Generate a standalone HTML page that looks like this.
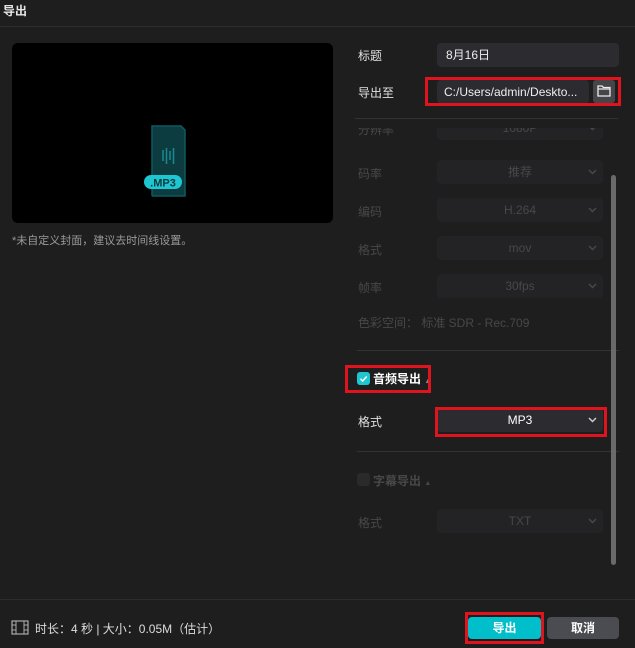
<!DOCTYPE html>
<html><head><meta charset="utf-8"><style>
*{margin:0;padding:0;box-sizing:border-box}
body{width:635px;height:648px;background:#1e1e1e;font-family:"Liberation Sans","Noto Sans CJK SC",sans-serif;color:#e6e6e6;font-size:12px;position:relative;overflow:hidden}
.a{position:absolute}
.lbl{position:absolute;left:358px;font-size:12px;color:#e0e0e0}
.fd{color:#484848}
.inp{position:absolute;left:437px;width:166px;height:24px;border-radius:4px;background:#2b2b30;font-size:12px;line-height:24px}
.fi{background:#232326;color:#484848;text-align:center}
.chev{position:absolute;right:6px;top:9px;width:9px;height:6px}
.red{position:absolute;border:3px solid #e0141e}
.hr{position:absolute;height:1px;background:#333}
</style></head><body>
<svg width="0" height="0" style="position:absolute"><defs><symbol id="cv" viewBox="0 0 9 6"><path d="M1 1l3.5 3.5L8 1" fill="none" stroke="currentColor" stroke-width="1.5"/></symbol></defs></svg>
<div class="a" style="left:3px;top:2px;font-size:12px;font-weight:bold">导出</div>
<div class="hr" style="left:0;top:26px;width:635px;background:#2e2e2e"></div>

<div class="a" style="left:12px;top:43px;width:321px;height:180px;background:#000;border-radius:6px"></div>
<svg class="a" style="left:140px;top:120px" width="60" height="80" viewBox="0 0 60 80">
<path d="M12 6h29l4 4v66h-32a1 1 0 0 1-1-1z" fill="#0d3c40" stroke="#0f5a60" stroke-width="1.5"/>
<g stroke="#1a8a92" stroke-width="1.5"><line x1="23" y1="30" x2="23" y2="41"/><line x1="26.5" y1="28" x2="26.5" y2="44"/><line x1="30" y1="31" x2="30" y2="40"/><line x1="33.5" y1="28" x2="33.5" y2="44"/></g>
<rect x="4" y="55" width="38" height="14" rx="7" fill="#1ec6d2"/>
<text x="23" y="66.5" text-anchor="middle" font-family="Liberation Sans" font-weight="bold" font-size="11" fill="#0b3a3e">.MP3</text>
</svg>
<div class="a" style="left:12px;top:232px;font-size:11px;color:#9a9a9a">*未自定义封面，建议去时间线设置。</div>

<div class="lbl" style="top:47px">标题</div>
<div class="inp" style="top:43px;width:182px;padding-left:9px;color:#eee">8月16日</div>
<div class="lbl" style="top:84px">导出至</div>
<div class="inp" style="top:80px;width:152px;padding-left:7px;color:#eee">C:/Users/admin/Deskto...</div>
<div class="a" style="left:593px;top:80px;width:22px;height:23px;background:#45454a;border-radius:3px"></div>
<svg class="a" style="left:597px;top:85px" width="14" height="12" viewBox="0 0 14 12"><path d="M1 1h4l1.5 1.5H13V11H1z" fill="none" stroke="#eee" stroke-width="1.3"/><line x1="1" y1="4" x2="13" y2="4" stroke="#eee" stroke-width="1.2"/></svg>
<div class="red" style="left:425px;top:77px;width:196px;height:29px"></div>
<div class="hr" style="left:355px;top:118px;width:263px"></div>

<div class="a" style="left:355px;top:128px;width:255px;height:20px;overflow:hidden">
 <div class="lbl fd" style="left:3px;top:-7px">分辨率</div>
 <div class="inp fi" style="left:82px;top:-12px">1080P<svg class="chev" style="color:#484848"><use href="#cv"/></svg></div>
</div>
<div class="lbl fd" style="top:165px">码率</div>
<div class="inp fi" style="top:160px">推荐<svg class="chev" style="color:#484848"><use href="#cv"/></svg></div>
<div class="lbl fd" style="top:203px">编码</div>
<div class="inp fi" style="top:198px">H.264<svg class="chev" style="color:#484848"><use href="#cv"/></svg></div>
<div class="lbl fd" style="top:241px">格式</div>
<div class="inp fi" style="top:236px">mov<svg class="chev" style="color:#484848"><use href="#cv"/></svg></div>
<div class="lbl fd" style="top:279px">帧率</div>
<div class="inp fi" style="top:274px">30fps<svg class="chev" style="color:#484848"><use href="#cv"/></svg></div>
<div class="lbl fd" style="top:314px">色彩空间： 标准 SDR - Rec.709</div>
<div class="hr" style="left:357px;top:350px;width:262px"></div>

<div class="a" style="left:357px;top:372px;width:13px;height:13px;border-radius:3px;background:#1ec6d2"></div>
<svg class="a" style="left:357px;top:372px" width="13" height="13" viewBox="0 0 13 13"><path d="M3.5 6.8l2.2 2.2 4-4.5" fill="none" stroke="#fff" stroke-width="1.5"/></svg>
<div class="a" style="left:373px;top:370px;font-weight:bold;color:#fff">音频导出 <span style="font-size:7px;color:#888">▲</span></div>
<div class="red" style="left:345px;top:365px;width:86px;height:28px"></div>
<div class="lbl" style="top:413px">格式</div>
<div class="inp" style="top:408px;text-align:center;color:#fff">MP3<svg class="chev" style="color:#ccc"><use href="#cv"/></svg></div>
<div class="red" style="left:435px;top:407px;width:172px;height:30px"></div>
<div class="hr" style="left:357px;top:451px;width:262px"></div>

<div class="a" style="left:357px;top:473px;width:13px;height:13px;border-radius:3px;background:#2a2a2a"></div>
<div class="a" style="left:373px;top:472px;font-weight:bold;color:#484848">字幕导出 <span style="font-size:7px">▲</span></div>
<div class="lbl fd" style="top:514px">格式</div>
<div class="inp fi" style="top:509px">TXT<svg class="chev" style="color:#484848"><use href="#cv"/></svg></div>

<div class="a" style="left:611px;top:175px;width:5px;height:390px;background:#6a6a6a;border-radius:3px"></div>

<div class="hr" style="left:0;top:599px;width:635px;background:#2c2c2c"></div>
<svg class="a" style="left:11px;top:620px" width="18" height="15" viewBox="0 0 18 15"><rect x="1" y="1" width="16" height="13" fill="none" stroke="#aaa" stroke-width="1.2"/><line x1="5" y1="1" x2="5" y2="14" stroke="#aaa"/><line x1="13" y1="1" x2="13" y2="14" stroke="#aaa"/><g stroke="#aaa"><line x1="1" y1="5" x2="5" y2="5"/><line x1="1" y1="10" x2="5" y2="10"/><line x1="13" y1="5" x2="17" y2="5"/><line x1="13" y1="10" x2="17" y2="10"/></g></svg>
<div class="a" style="left:35px;top:620px;color:#ddd">时长：4 秒 | 大小：0.05M（估计）</div>
<div class="a" style="left:468px;top:617px;width:73px;height:22px;background:#00bfca;border-radius:4px;text-align:center;line-height:22px;color:#fff;font-weight:bold">导出</div>
<div class="red" style="left:465px;top:612px;width:79px;height:32px"></div>
<div class="a" style="left:547px;top:617px;width:72px;height:22px;background:#4b4b52;border-radius:4px;text-align:center;line-height:22px;color:#fff;font-weight:bold">取消</div>
</body></html>
